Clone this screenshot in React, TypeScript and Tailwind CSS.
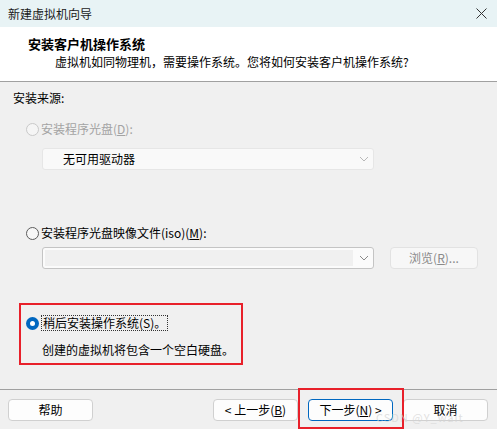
import React from "react";

const font = { fontFamily: '"Noto Sans CJK SC", "Noto Sans", sans-serif' };

function Radio({ checked, disabled }: { checked?: boolean; disabled?: boolean }) {
  if (checked) {
    return (
      <span className="flex h-[13px] w-[13px] shrink-0 items-center justify-center rounded-full bg-[#0067c0]">
        <span className="h-[5px] w-[5px] rounded-full bg-white" />
      </span>
    );
  }
  return (
    <span
      className={
        disabled
          ? "h-[13px] w-[13px] shrink-0 rounded-full border border-[#c9c9c9] bg-[#f5f5f5]"
          : "h-[13px] w-[13px] shrink-0 rounded-full border border-[#5c5c5c] bg-[#f7f7f7]"
      }
    />
  );
}

function Chevron({ light }: { light?: boolean }) {
  return (
    <svg width="10" height="6" viewBox="0 0 10 6" className="shrink-0">
      <path d="M1 1 L5 5 L9 1" fill="none" stroke={light ? "#b8b8b8" : "#8a8a8a"} strokeWidth="1" />
    </svg>
  );
}

function Btn({ label, primary }: { label: React.ReactNode; primary?: boolean }) {
  return (
    <div
      className={
        primary
          ? "flex h-[22px] w-[85px] items-center justify-center rounded-[4px] border border-[#0067c0] bg-[#fdfdfd] text-[12px] leading-[16px] text-black"
          : "flex h-[22px] w-[85px] items-center justify-center rounded-[4px] border border-[#d0d0d0] bg-[#fdfdfd] text-[12px] leading-[16px] text-black"
      }
    >
      {label}
    </div>
  );
}

export default function App() {
  return (
    <div style={font} className="relative flex h-[429px] w-[497px] flex-col overflow-hidden bg-[#f0f0f0] text-black">
      {/* title bar */}
      <div className="flex h-[27px] shrink-0 items-center justify-between bg-[#e8f3f5] pl-[8px] pr-[10px]">
        <span className="text-[12px] leading-[16px] text-[#1a1a1a]">新建虚拟机向导</span>
        <svg width="11" height="11" viewBox="0 0 11 11">
          <path d="M0.5 0.5 L10.5 10.5 M10.5 0.5 L0.5 10.5" stroke="#333" strokeWidth="1" />
        </svg>
      </div>

      {/* header */}
      <div className="h-[55px] shrink-0 border-b border-[#a0a0a0] bg-white pt-[8px]">
        <div className="pl-[28px] text-[13px] font-bold leading-[17px]">安装客户机操作系统</div>
        <div className="mt-[2px] pl-[55px] text-[12px] leading-[16px]">
          虚拟机如同物理机，需要操作系统。您将如何安装客户机操作系统?
        </div>
      </div>

      {/* body */}
      <div className="flex flex-1 flex-col text-[12px] leading-[16px]">
        <div className="ml-[13px] mt-[8px]">安装来源:</div>

        <div className="ml-[26px] mt-[15px] flex h-[16px] items-center gap-[2px] text-[#a3a3a3]">
          <Radio disabled />
          <span>
            安装程序光盘(<span className="underline">D</span>):
          </span>
        </div>

        <div className="ml-[42px] mt-[11px] flex h-[22px] w-[332px] items-center justify-between rounded-[3px] border border-[#e6e6e6] bg-[#f9f9f9] pl-[20px] pr-[4px]">
          <span>无可用驱动器</span>
          <Chevron light />
        </div>

        <div className="ml-[26px] mt-[55px] flex h-[16px] items-center gap-[2px]">
          <Radio />
          <span>
            安装程序光盘映像文件(iso)(<span className="underline">M</span>):
          </span>
        </div>

        <div className="ml-[42px] mt-[6px] flex items-center gap-[16px]">
          <div className="flex h-[22px] w-[332px] items-center rounded-[3px] border border-[#c4c4c4] bg-[#fbfbfb] pl-[2px] pr-[4px]">
            <div className="h-[16px] flex-1 bg-[#f0f0f0]" />
            <div className="ml-[6px]">
              <Chevron />
            </div>
          </div>
          <div className="flex h-[22px] w-[88px] items-center justify-center rounded-[4px] border border-[#e2e2e2] bg-[#f7f7f7] text-[#8a8a8a]">
            浏览(<span className="underline">R</span>)...
          </div>
        </div>

        <div className="ml-[19px] mt-[34px] h-[62px] w-[224px] border-2 border-[#e8202a] pl-[5px] pt-[10px]">
          <div className="flex h-[16px] items-center gap-[2px]">
            <Radio checked />
            <span className="border border-dotted border-[#333] px-[1px] leading-[14px]">稍后安装操作系统(S)。</span>
          </div>
          <div className="ml-[16px] mt-[11px]">创建的虚拟机将包含一个空白硬盘。</div>
        </div>

        <div className="flex-1" />

        {/* footer */}
        <div className="h-[40px] border-t border-[#a0a0a0] pt-[9px]">
          <div className="flex items-center pl-[8px]">
            <Btn label="帮助" />
            <div className="ml-[120px]">
              <Btn
                label={
                  <span>
                    &lt; 上一步(<span className="underline">B</span>)
                  </span>
                }
              />
            </div>
            <div className="ml-[10px]">
              <Btn
                primary
                label={
                  <span>
                    下一步(<span className="underline">N</span>) &gt;
                  </span>
                }
              />
            </div>
            <div className="ml-[10px]">
              <Btn label="取消" />
            </div>
          </div>
        </div>
      </div>

      {/* annotation + watermark overlays */}
      <div className="pointer-events-none absolute left-[298px] top-[388px] h-[41px] w-[106px] border-2 border-[#e8202a]" />
      <div className="pointer-events-none absolute left-[376px] top-[411px] text-[11px] leading-[12px] tracking-[1px] text-[#d4d4d4]/70">
        CSDN @Y_wait
      </div>
    </div>
  );
}
